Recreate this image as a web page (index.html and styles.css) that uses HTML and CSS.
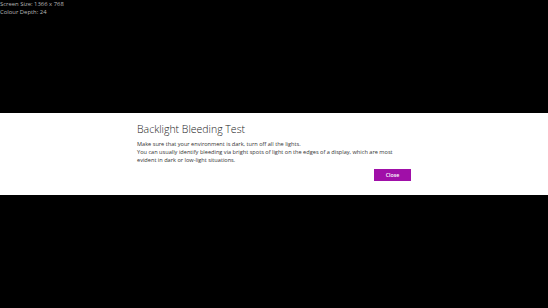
FILE: index.html
```html
<!DOCTYPE html>
<html>
<head>
<meta charset="utf-8">
<link rel="stylesheet" href="styles.css">
</head>
<body>
<div class="info">
  <div>Screen Size: 1366 x 768</div>
  <div>Colour Depth: 24</div>
</div>
<div class="band">
  <div class="dialog">
    <h1 class="title">Backlight Bleeding Test</h1>
    <p class="text">Make sure that your environment is dark, turn off all the lights.<br>You can usually identify bleeding via bright spots of light on the edges of a display, which are most evident in dark or low-light situations.</p>
    <div class="actions"><button class="close">Close</button></div>
  </div>
</div>
</body>
</html>
```
FILE: styles.css
```css
html, body {
  margin: 0;
  padding: 0;
  background: #000;
  height: 100%;
}
body {
  font-family: "Open Sans", "Noto Sans", sans-serif;
}
.info {
  color: #b8b8b8;
  font-size: 5.9px;
  line-height: 8px;
  height: 113px;
}
.band {
  background: #fff;
  height: 82px;
}
.dialog {
  width: 274px;
  margin: 0 auto;
  padding-top: 9px;
}
.title {
  margin: 0;
  font-weight: 300;
  font-size: 10.5px;
  line-height: 14px;
  color: #222;
}
.text {
  margin: 4px 0 0;
  font-size: 5.62px;
  line-height: 8px;
  color: #333;
}
.actions {
  display: flex;
  justify-content: flex-end;
  margin-top: 5px;
}
.close {
  width: 37px;
  height: 12px;
  border: 0;
  padding: 0;
  background: #a00fa8;
  color: #fff;
  font-family: "Open Sans", "Noto Sans", sans-serif;
  font-size: 5.3px;
  font-weight: 600;
}
```
